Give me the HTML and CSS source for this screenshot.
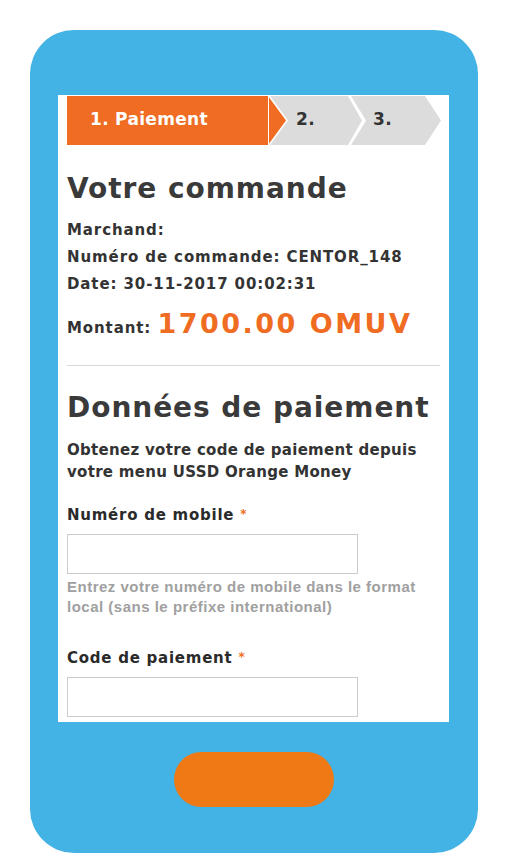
FILE: index.html
```html
<!DOCTYPE html>
<html lang="fr">
<head>
<meta charset="utf-8">
<link rel="stylesheet" href="styles.css">
</head>
<body>
<div class="phone">
  <div class="screen">
    <div class="steps">
      <div class="step step-active">1. Paiement</div>
      <div class="step step-2">2.</div>
      <div class="step step-3">3.</div>
    </div>
    <div class="content">
      <h1 class="title">Votre commande</h1>
      <p class="info">Marchand:</p>
      <p class="info">Numéro de commande: CENTOR_148</p>
      <p class="info">Date: 30-11-2017 00:02:31</p>
      <p class="amount"><span class="amount-label">Montant:</span> <span class="amount-value">1700.00 OMUV</span></p>
      <hr class="sep">
      <h1 class="title title-2">Données de paiement</h1>
      <p class="intro">Obtenez votre code de paiement depuis votre menu USSD Orange Money</p>
      <label class="field-label">Numéro de mobile <span class="req">*</span></label>
      <div class="input"></div>
      <p class="help">Entrez votre numéro de mobile dans le format local (sans le préfixe international)</p>
      <label class="field-label field-label-2">Code de paiement <span class="req">*</span></label>
      <div class="input"></div>
    </div>
  </div>
  <div class="home"></div>
</div>
</body>
</html>
```
FILE: styles.css
```css
html, body {
  margin: 0;
  padding: 0;
  background: #fff;
}
body {
  font-family: "DejaVu Sans", "Liberation Sans", Arial, sans-serif;
  color: #333;
}
.phone {
  margin: 30px 0 0 30px;
  width: 448px;
  height: 823px;
  background: #43b2e4;
  border-radius: 44px;
  display: flex;
  flex-direction: column;
  align-items: flex-start;
}
.screen {
  margin: 65px 0 0 28px;
  width: 391px;
  height: 627px;
  background: #fff;
  overflow: hidden;
  padding: 1px 0 0 9px;
  box-sizing: border-box;
}
.steps {
  display: flex;
  height: 49px;
}
.step {
  height: 49px;
  display: flex;
  align-items: center;
  font-weight: bold;
  font-size: 17px;
  letter-spacing: 0.3px;
  box-sizing: border-box;
  padding-bottom: 3px;
}
.step-active {
  width: 219px;
  background: linear-gradient(to right, #ef6c22 0, #ef6c22 201px, #fff 201px, #fff 202px, #ef6c22 202px);
  color: #fff;
  padding-left: 23px;
  clip-path: polygon(0 0, 201px 0, 219px 50%, 201px 100%, 0 100%);
}
.step-2 {
  width: 92px;
  margin-left: -16px;
  background: #dcdcdc;
  color: #333;
  padding-left: 26px;
  clip-path: polygon(0 0, 78px 0, 92px 50%, 78px 100%, 0 100%, 18px 50%);
}
.step-3 {
  width: 90px;
  margin-left: -11px;
  background: #dcdcdc;
  color: #333;
  padding-left: 22px;
  clip-path: polygon(0 0, 74px 0, 90px 50%, 74px 100%, 0 100%, 15px 50%);
}
.content {
  width: 373px;
}
.title {
  margin: 28px 0 0;
  font-size: 28px;
  line-height: 32px;
  font-weight: bold;
  color: #3a3a3a;
  letter-spacing: 0.95px;
}
.info {
  margin: 0;
  font-size: 15px;
  font-weight: bold;
  line-height: 27px;
  letter-spacing: 0.9px;
}
.info:first-of-type {
  margin-top: 12px;
}
.amount {
  margin: 10px 0 0;
  font-weight: bold;
  font-size: 15px;
  line-height: 32px;
  letter-spacing: 0.9px;
}
.amount-value {
  color: #ef6c22;
  font-size: 27px;
  letter-spacing: 2.5px;
}
.sep {
  border: 0;
  border-top: 1px solid #d9d9d9;
  margin: 21px 0 0;
}
.title-2 {
  margin-top: 26px;
}
.intro {
  margin: 15px 0 0;
  font-size: 15px;
  font-weight: bold;
  line-height: 22px;
  letter-spacing: 0.3px;
  width: 365px;
}
.field-label {
  display: block;
  margin-top: 21px;
  font-size: 15px;
  font-weight: bold;
  line-height: 22px;
  color: #2a2a2a;
  letter-spacing: 0.75px;
}
.req {
  color: #ef6c22;
  font-size: 12px;
  line-height: 0;
  vertical-align: 2px;
}
.input {
  margin-top: 8px;
  width: 291px;
  height: 40px;
  border: 1px solid #ccc;
  box-sizing: border-box;
}
.help {
  margin: 3px 0 0;
  font-family: "Liberation Sans", Arial, sans-serif;
  font-size: 15px;
  font-weight: bold;
  line-height: 20px;
  color: #a0a0a0;
  letter-spacing: 0.5px;
  width: 365px;
}
.field-label-2 {
  margin-top: 30px;
}
.home {
  margin: 30px auto 0;
  width: 160px;
  height: 55px;
  border-radius: 28px;
  background: #ef7914;
}
```
